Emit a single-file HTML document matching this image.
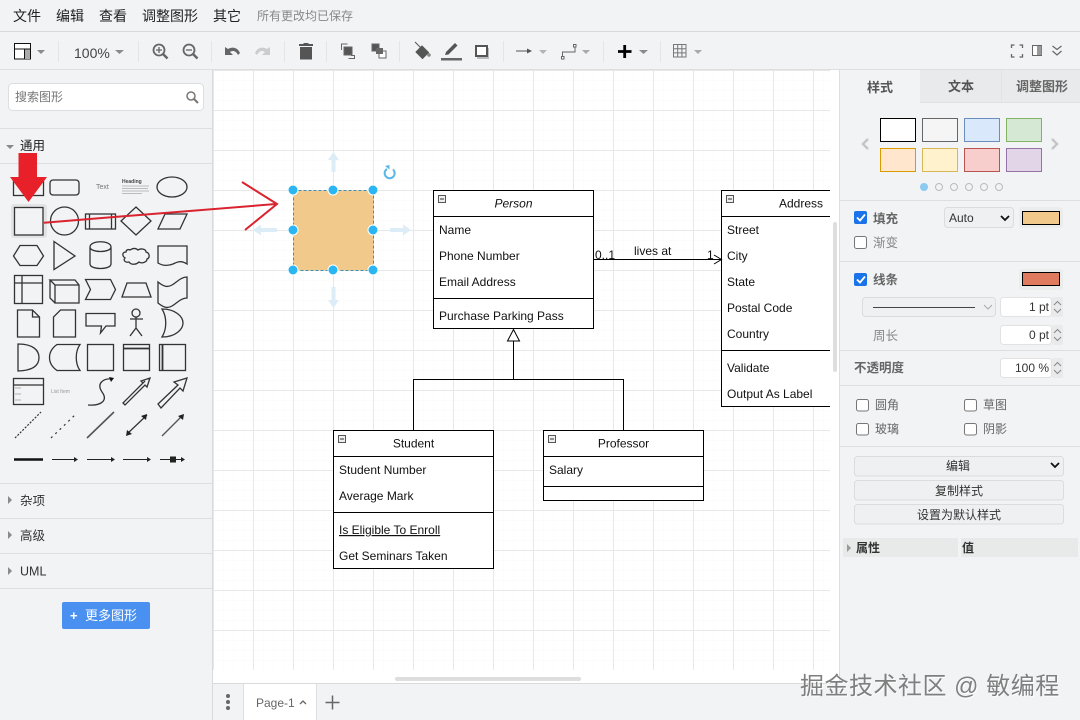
<!DOCTYPE html>
<html><head><meta charset="utf-8"><style>
html,body{margin:0;padding:0;width:1080px;height:720px;overflow:hidden;background:#f1f3f4}
svg{display:block;position:absolute;left:0;top:0}
text{font-family:"Liberation Sans","Noto Sans CJK SC",sans-serif;font-size:12px;fill:#1a1a1a}
.m{font-size:14px;fill:#222}
.d{font-size:12px;fill:#111}
.s{fill:none;stroke:#333;stroke-width:1.3}
.u{fill:none;stroke:#000;stroke-width:1}
.h{fill:#29b6f2;stroke:#fff;stroke-width:1}
.g{fill:#555}
.sep{stroke:#e3e5e7;stroke-width:1}
.dv{stroke:#dcdee0;stroke-width:1}
.btn{fill:#eff0f1;stroke:#dcdcdc}
.sw{stroke-width:1}
.inp{fill:#fff;stroke:#e2e2e2}
.spin{fill:#e9eaeb}
.car{fill:#8a8a8a}
</style></head><body>
<svg width="1080" height="720" viewBox="0 0 1080 720" xmlns="http://www.w3.org/2000/svg">
<defs>
<pattern id="gm" width="10" height="10" patternUnits="userSpaceOnUse" x="3.5" y="0.5"><path d="M10 0H0V10" fill="none" stroke="#f8f8f8" stroke-width="1"/></pattern>
<pattern id="gM" width="40" height="40" patternUnits="userSpaceOnUse" x="13" y="30"><path d="M40.5 .5H.5V40.5" fill="none" stroke="#e8e8e8" stroke-width="1"/></pattern>
</defs>
<rect width="1080" height="720" fill="#f1f3f4"/>
<!-- canvas -->
<rect x="213" y="70" width="627" height="613" fill="#fff"/>
<rect x="213" y="70" width="617" height="600" fill="url(#gm)"/>
<rect x="213" y="70" width="617" height="600" fill="url(#gM)"/>
<rect x="839" y="70" width="1" height="613" fill="#dcdee0"/>
<rect x="833" y="222" width="4" height="150" rx="2" fill="#dedede"/>
<rect x="395" y="677" width="186" height="4" rx="2" fill="#dedede"/>
<!-- menu -->
<text class="m" x="13" y="21">文件</text><text class="m" x="56" y="21">编辑</text><text class="m" x="99" y="21">查看</text><text class="m" x="142" y="21">调整图形</text><text class="m" x="213" y="21">其它</text>
<text x="257" y="20" style="fill:#888">所有更改均已保存</text>
<line x1="0" y1="31.5" x2="1080" y2="31.5" stroke="#d6d8da"/>
<line x1="0" y1="69.5" x2="1080" y2="69.5" stroke="#dcdee0"/>
<!-- toolbar separators -->
<g class="sep"><path d="M58.5 41V62M138.5 41V62M211.5 41V62M284.5 41V62M326.5 41V62M399.5 41V62M503.5 41V62M603.5 41V62M660.5 41V62"/></g>
<!-- layout -->
<rect x="14.5" y="43.5" width="16" height="15.5" fill="#fff" stroke="#111"/><rect x="25" y="49" width="5" height="10" fill="#aaa"/><path d="M14.5 49H30.5M24.5 49V59" stroke="#111" fill="none"/>
<path class="car" d="M37 50h8l-4 4z"/>
<text x="74" y="58" style="font-size:14px;fill:#444">100%</text>
<path class="car" d="M115 50h9l-4.500 4z"/>
<!-- zoom -->
<g fill="none" stroke="#666" stroke-width="1.800"><circle cx="159" cy="50" r="5.500"/><path d="M163 54l4.500 4.500" stroke-width="2.500"/><path d="M156 50h6M159 47v6" stroke-width="1.300"/>
<circle cx="189" cy="50" r="5.500"/><path d="M193 54l4.500 4.500" stroke-width="2.500"/><path d="M186 50h6" stroke-width="1.300"/></g>
<!-- undo/redo -->
<path d="M225 52l0-5 3 2c5-3 10-1 12 4l-2 2c-2-4-5-5-8-3l3 3h-8z" fill="#666"/>
<path d="M270 52l0-5-3 2c-5-3-10-1-12 4l2 2c2-4 5-5 8-3l-3 3h8z" fill="#ccc"/>
<!-- trash -->
<path class="g" d="M300 47h12v12.500h-12zM299 44h14v2h-14zM303.500 43h5v1.500h-5z"/>
<!-- to front/back -->
<g fill="none" stroke="#666"><path d="M341.500 47.500v-3.500h6M351 55.500h3.500v3h-6"/><rect x="344" y="47" width="8" height="8" fill="#555"/><path d="M341.500 44v6"/>
<rect x="372" y="44" width="7" height="7" fill="#555"/><rect x="379" y="51" width="7" height="7" fill="#fff"/><rect x="376" y="48" width="7" height="6" fill="#666" stroke="none"/></g>
<!-- fill -->
<path class="g" d="M416 52l6-6 6.500 6.500-6 6zM415 42l8 8" stroke="#555"/><circle cx="429" cy="55" r="1.800" fill="#888"/>
<!-- pen -->
<path class="g" d="M445 55l1-3 9-9 2.500 2.500-9 9z"/><rect x="441" y="58" width="21" height="2.500" fill="#666"/>
<!-- shadow -->
<rect x="477" y="48" width="12" height="11" fill="#bbb"/><rect x="476" y="46" width="11" height="10" fill="#fff" stroke="#555" stroke-width="2"/>
<!-- arrow -->
<path d="M516 51h14" stroke="#555" fill="none"/><path d="M527 48.500l5 2.500-5 2.500z" fill="#555"/>
<path class="car" d="M539 50h8l-4 4z" opacity=".6"/>
<!-- waypoint -->
<path d="M562.500 56v-4h12.500v-6" fill="none" stroke="#666"/><rect x="561.500" y="56.500" width="2.500" height="2.500" fill="#fff" stroke="#666"/><rect x="573.500" y="44.500" width="2.500" height="2.500" fill="#fff" stroke="#666"/>
<path class="car" d="M582 50h8l-4 4z" opacity=".7"/>
<!-- plus -->
<path d="M618 51.500h13.500M624.700 45v13" stroke="#000" stroke-width="2.800" fill="none"/>
<path class="car" d="M639 50h9l-4.500 4z"/>
<!-- table -->
<path d="M673.500 44.500h12.500v12.500h-12.500zM673.500 48.700h12.500M673.500 52.900h12.500M677.700 44.500v12.500M681.900 44.500v12.500" fill="none" stroke="#777"/>
<path class="car" d="M694 50h8l-4 4z" opacity=".7"/>
<!-- right icons -->
<path d="M1011.500 48v-3h3M1019.500 45h3v3M1022.500 54v3h-3M1014.500 57h-3v-3" fill="none" stroke="#666" stroke-width="1.300"/>
<rect x="1032.500" y="45.500" width="9" height="10" fill="#fff" stroke="#666"/><rect x="1037" y="46" width="4.500" height="9" fill="#999"/>
<path d="M1052.500 46l4.500 3.500 4.500-3.500M1052.500 51l4.500 4 4.500-4" fill="none" stroke="#666" stroke-width="1.200"/>

<!-- left sidebar -->
<rect x="212" y="70" width="1" height="650" fill="#d8dadc"/>
<rect x="8.500" y="83.500" width="195" height="27" rx="4" fill="#fff" stroke="#dcdee0"/>
<text x="15" y="101" style="fill:#777">搜索图形</text>
<circle cx="191" cy="96" r="4" fill="none" stroke="#777" stroke-width="1.500"/><path d="M194 99l4 4" stroke="#777" stroke-width="2"/>
<g class="dv"><path d="M0 128.500H212M0 163.500H212M0 483.500H212M0 518.500H212M0 553.500H212M0 588.500H212"/></g>
<path class="car" d="M6 145h8l-4 4z"/><text x="20" y="150" style="font-size:12.500px">通用</text>
<path class="car" d="M8 496l4 4-4 4z"/><text x="20" y="505" style="font-size:12.500px;fill:#333">杂项</text>
<path class="car" d="M8 531l4 4-4 4z"/><text x="20" y="540" style="font-size:12.500px;fill:#333">高级</text>
<path class="car" d="M8 567l4 4-4 4z"/><text x="20" y="575.500" style="font-size:12.500px;fill:#333">UML</text>
<rect x="62" y="602" width="88" height="27" rx="2" fill="#4a90f0"/>
<text x="70" y="620" style="fill:#fff;font-size:13px;font-weight:bold">+</text><text x="85" y="620" style="fill:#fff;font-size:13px">更多图形</text>

<rect x="11" y="204" width="36" height="34" rx="3" fill="#e1e3e4"/>
<rect x="14.500" y="207.500" width="28.500" height="27.500" fill="#f1f3f4"/>
<g class="s">
<rect x="13.500" y="180.500" width="30" height="15"/><rect x="50" y="180" width="29" height="15" rx="3"/>
<ellipse cx="172" cy="187" rx="15" ry="10"/>
<rect x="14.500" y="207.500" width="28.500" height="27.500"/><circle cx="64.500" cy="221" r="14"/>
<rect x="85.500" y="214" width="30" height="15"/><path d="M89.500 214v15M111.500 214v15"/>
<path d="M136 207l15 14-15 14-15-14z"/><path d="M158 229l7-15h22l-7 15z"/>
<path d="M13.500 256l6.500-10.500h17l6.500 10.500-6.500 9.500h-17z"/><path d="M54 241.500l21 14.500-21 13.500z"/>
<path d="M90 247v17c0 6 21 6 21 0v-17c0-7-21-7-21 0c0 6 21 6 21 0"/>
<path d="M130 250c3-2 6-2 8 0c3-2 8-1 8 2c4 1 4 6 1 7c0 3-5 5-8 3c-3 3-8 3-10 0c-4 1-6-2-4-4c-3-2-3-6 1-6c0-2 2-3 4-2z"/>
<path d="M158 246h29v18c-6-4-10-2-14 0c-5 2-10 2-15-1z"/>
<rect x="14.500" y="275.500" width="28" height="28"/><path d="M22 275.500v28M14.500 283h28"/>
<path d="M50 280l5 5v18h24v-18l-4-5zM55 285h24M50 280v18l5 5"/>
<path d="M85.500 279.500h25l5 10-5 10h-25l5-10z"/><path d="M122 297l5-14h19l5 14z"/>
<path d="M158 282c5 4 9 6 14 3s9-8 15-8v21c-6 0-10 5-15 8s-9 1-14-3z"/>
<path d="M17.500 310h15l7 7v20h-22zM32.500 310v7h7"/><path d="M60.500 310h15v27h-22v-20z"/>
<path d="M86 313.500h29v12.500h-9l-5.500 7 1-7h-15.500z"/>
<circle cx="136" cy="313" r="4"/><path d="M136 317v11M130 319h13M136 328l-6 8M136 328l6 8"/>
<path d="M162 309c14 0 21 8 21 14c0 6-7 14-21 14c5-8 5-20 0-28z"/>
<path d="M18 344c16 0 21 7 21 13.500c0 7-5 13-21 13.500z"/>
<path d="M57 344.500h23c-5 7-5 19 0 26h-23c-10-7-10-19 0-26z"/>
<rect x="87.500" y="344.500" width="26" height="26"/><rect x="123.500" y="344.500" width="26" height="26"/><path d="M123.500 348.500h26" stroke-width="1.800"/>
<rect x="159.500" y="344.500" width="26" height="26"/><path d="M162.500 344.500v26" stroke-width="1.800"/>
<rect x="13.500" y="378.500" width="30" height="26"/><path d="M13.500 385h30"/>
<path d="M88 405c14 1 20-5 14-13c-6-9 2-14 10-13"/>
<path d="M123 403l20-20-2-2 9-3-3 9-2-2-20 20-2-2zM126 400l19-19"/>
<path d="M158 404l20-19-4-3 13-4-4 13-3-3-19 20z"/>
</g>
<path d="M15 388h6M15 394h6M15 400h6" stroke="#999" stroke-width=".8"/>
<path d="M114 378l-5-1 2 5z" fill="#111"/>
<g fill="none" stroke="#333">
<path d="M15 438l26-26" stroke-dasharray="2 1.500" stroke-width="1.200"/><path d="M51 438l25-24" stroke-dasharray="2 4" stroke-width="1.200"/>
<path d="M87 438l27-26" stroke="#555" stroke-width="1.600"/><path d="M127 434l20-19" stroke-width="1.300"/><path d="M162 436l21-21" stroke-width="1.300" stroke="#555"/>
<path d="M14 459.500h29" stroke="#111" stroke-width="2.500"/><path d="M52 459.500h25M87 459.500h27M123 459.500h27M160 459.500h24" stroke="#222"/>
</g>
<g fill="#222"><path d="M147 414l-1 6-5-4zM126 436l1-6 5 4zM184 414l-1 6-5-4zM78 459.500l-4-2.500v5zM115 459.500l-4-2.500v5zM151 459.500l-4-2.500v5zM185 459.500l-4-2.500v5z"/><rect x="170" y="456.500" width="6" height="6"/></g>
<text x="51" y="393" style="font-size:5px;fill:#999">List Item</text>
<text x="96" y="189" style="font-size:7px;fill:#777">Text</text>
<text x="122" y="183" style="font-size:5px;font-weight:bold;fill:#444">Heading</text>
<path d="M122 186h27M122 188.500h26M122 191h27M122 193.500h20" stroke="#aaa" stroke-width=".8"/>

<!-- red arrows -->
<path d="M18.500 153H37V177H47L28.500 202 10 177H18.500z" fill="#e8202a"/>
<path d="M44 222.700L276 204M242 182L277 204 245 230" fill="none" stroke="#d9232e" stroke-width="2"/>

<!-- selected shape -->
<rect x="293.500" y="190.500" width="80" height="80" fill="#f0c98b" stroke="#3f8fb5" stroke-dasharray="3 2"/>
<g fill="#dcedf7">
<path d="M333.500 152l5.500 8h-3.500v12h-4v-12h-3.500z"/><path d="M333.500 308l5.500-8h-3.500v-13h-4v13h-3.500z"/>
<path d="M253 230l8-5.500v3.500h16v4h-16v3.500z"/><path d="M411 230l-8-5.500v3.500h-13v4h13v3.500z"/>
</g>
<g class="h"><circle cx="293" cy="190" r="5"/><circle cx="333" cy="190" r="5"/><circle cx="373" cy="190" r="5"/><circle cx="293" cy="230" r="5"/><circle cx="373" cy="230" r="5"/><circle cx="293" cy="270" r="5"/><circle cx="333" cy="270" r="5"/><circle cx="373" cy="270" r="5"/></g>
<path d="M393 169.500a5 5 0 1 1-6-0.500" fill="none" stroke="#5ab7e8" stroke-width="2"/><path d="M385 166l4.500-1v4.500z" fill="#5ab7e8"/>

<!-- UML -->
<g fill="#fff" stroke="#000">
<rect x="433.500" y="190.500" width="160" height="138"/>
<rect x="333.500" y="430.500" width="160" height="138"/>
<rect x="543.500" y="430.500" width="160" height="70"/>
<path d="M830 190.500H721.500V406.500H830"/>
</g>
<path class="u" d="M433.500 216.500h160M433.500 298.500h160M721.500 216.500H830M721.500 350.500H830M333.500 456.500h160M333.500 512.500h160M543.500 456.500h160M543.500 486.500h160"/>
<path class="u" d="M593.500 259.500H721.500M714 255l7.500 4.500-7.500 4.500M513.500 341V379.500M413.500 430V379.500H623.500V430"/>
<path d="M513.500 329.500l6 11.500h-12z" fill="#fff" stroke="#000"/>
<g fill="#eee" stroke="#555"><rect x="438.500" y="195.500" width="7" height="7"/><rect x="726.500" y="195.500" width="7" height="7"/><rect x="338.500" y="435.500" width="7" height="7"/><rect x="548.500" y="435.500" width="7" height="7"/></g>
<path d="M440 199h4M728 199h4M340 439h4M550 439h4" stroke="#333"/>
<g>
<text class="d" x="513.500" y="207.500" text-anchor="middle" style="font-style:italic">Person</text>
<text class="d" x="439" y="234">Name</text><text class="d" x="439" y="260">Phone Number</text><text class="d" x="439" y="286">Email Address</text><text class="d" x="439" y="320">Purchase Parking Pass</text>
<text class="d" x="595" y="259">0..1</text><text class="d" x="634" y="255">lives at</text><text class="d" x="707" y="259">1</text>
<text class="d" x="779" y="207.500">Address</text>
<text class="d" x="727" y="234">Street</text><text class="d" x="727" y="260">City</text><text class="d" x="727" y="286">State</text><text class="d" x="727" y="312">Postal Code</text><text class="d" x="727" y="338">Country</text><text class="d" x="727" y="372">Validate</text><text class="d" x="727" y="398">Output As Label</text>
<text class="d" x="413.500" y="447.500" text-anchor="middle">Student</text>
<text class="d" x="339" y="474">Student Number</text><text class="d" x="339" y="500">Average Mark</text><text class="d" x="339" y="534" text-decoration="underline">Is Eligible To Enroll</text><text class="d" x="339" y="560">Get Seminars Taken</text>
<text class="d" x="623.500" y="447.500" text-anchor="middle">Professor</text>
<text class="d" x="549" y="474">Salary</text>
</g>

<!-- bottom -->
<rect x="213" y="683" width="627" height="37" fill="#f1f3f4"/>
<rect x="213" y="683" width="627" height="1" fill="#d8dadc"/>
<rect x="244" y="684" width="72" height="36" fill="#fff"/>
<path d="M243.500 684V720M316.500 684V720" stroke="#dcdee0"/>
<circle cx="228" cy="696" r="2" fill="#666"/><circle cx="228" cy="702" r="2" fill="#666"/><circle cx="228" cy="708" r="2" fill="#666"/>
<text x="256" y="707" style="fill:#666">Page-1</text>
<path d="M300 704l3-3 3 3" fill="none" stroke="#666" stroke-width="1.300"/>
<path d="M325.500 702.500h14M332.500 695.500v14" stroke="#666" stroke-width="1.500"/>

<!-- right panel -->
<rect x="840" y="70" width="240" height="650" fill="#f1f3f4"/>
<rect x="920" y="70" width="160" height="32" fill="#e9eaeb"/>
<path d="M1001.500 70V102" stroke="#e2e3e4"/>
<path d="M920 102.500H1080" stroke="#e0e1e2"/>
<text x="867" y="92" style="font-size:13px;font-weight:bold;fill:#555">样式</text><text x="948" y="91" style="font-size:13px;font-weight:bold;fill:#555">文本</text><text x="1016" y="91" style="font-size:13px;font-weight:bold;fill:#666">调整图形</text>
<g class="sw">
<rect x="880.500" y="118.500" width="35" height="23" fill="#fff" stroke="#000"/>
<rect x="922.500" y="118.500" width="35" height="23" fill="#f5f5f5" stroke="#666"/>
<rect x="964.500" y="118.500" width="35" height="23" fill="#dae8fc" stroke="#6c8ebf"/>
<rect x="1006.500" y="118.500" width="35" height="23" fill="#d5e8d4" stroke="#82b366"/>
<rect x="880.500" y="148.500" width="35" height="23" fill="#ffe6cc" stroke="#d79b00"/>
<rect x="922.500" y="148.500" width="35" height="23" fill="#fff2cc" stroke="#d6b656"/>
<rect x="964.500" y="148.500" width="35" height="23" fill="#f8cecc" stroke="#b85450"/>
<rect x="1006.500" y="148.500" width="35" height="23" fill="#e1d5e7" stroke="#9673a6"/>
</g>
<path d="M868 139l-5 5 5 5M1052 139l5 5-5 5" fill="none" stroke="#c4c6c8" stroke-width="2.500"/>
<circle cx="924" cy="187" r="4" fill="#8ccaf2"/>
<g fill="none" stroke="#bbb"><circle cx="939" cy="187" r="3.500"/><circle cx="954" cy="187" r="3.500"/><circle cx="969" cy="187" r="3.500"/><circle cx="984" cy="187" r="3.500"/><circle cx="999" cy="187" r="3.500"/></g>
<g class="dv"><path d="M840 200.500H1080M840 261.500H1080M840 350.500H1080M840 385.500H1080M840 446.500H1080"/></g>

<rect x="854" y="211" width="13" height="13" rx="2" fill="#1a73e8"/><path d="M857 217.500l3 3 5-6" fill="none" stroke="#fff" stroke-width="1.800"/>
<text x="873" y="223" style="font-size:12.500px;font-weight:bold;fill:#666">填充</text>
<rect x="944.500" y="207.500" width="69" height="20" rx="3" class="btn"/><text x="949" y="222" style="fill:#333">Auto</text><path d="M1001 216l4 4 4-4" fill="none" stroke="#111" stroke-width="1.800"/>
<rect x="1019" y="207" width="44" height="21" rx="3" fill="#ebecec"/><rect x="1022.500" y="211.500" width="37" height="13" fill="#f0c98b" stroke="#000"/>
<rect x="854.500" y="236.500" width="12" height="12" rx="2" fill="#fff" stroke="#777"/><text x="873" y="247" style="font-size:12.500px;fill:#888">渐变</text>
<rect x="854" y="273" width="13" height="13" rx="2" fill="#1a73e8"/><path d="M857 279.500l3 3 5-6" fill="none" stroke="#fff" stroke-width="1.800"/>
<text x="873" y="284" style="font-size:12.500px;font-weight:bold;fill:#666">线条</text>
<rect x="1019" y="269" width="44" height="21" rx="3" fill="#ebecec"/><rect x="1022.500" y="272.500" width="37" height="13" fill="#e07a5f" stroke="#000"/>
<rect x="862.500" y="297.500" width="133" height="19" rx="3" class="btn"/><path d="M873 307.500h102" stroke="#444"/><path d="M984 305l4 4 4-4" fill="none" stroke="#aaa"/>
<g>
<rect x="1000.500" y="297.500" width="51" height="19" rx="3" class="inp"/><text x="1049" y="311" text-anchor="end" style="fill:#333">1 pt</text>
<rect x="1000.500" y="325.500" width="51" height="19" rx="3" class="inp"/><text x="1049" y="339" text-anchor="end" style="fill:#333">0 pt</text>
<rect x="1000.500" y="358.500" width="51" height="19" rx="3" class="inp"/><text x="1049" y="372" text-anchor="end" style="fill:#333">100 %</text>
<rect x="1052" y="297" width="11" height="20" rx="2" class="spin"/><rect x="1052" y="325" width="11" height="20" rx="2" class="spin"/><rect x="1052" y="358" width="11" height="20" rx="2" class="spin"/>
<path d="M1054 305l3.500-3.500 3.500 3.500M1054 309l3.500 3.500 3.500-3.500M1054 333l3.500-3.500 3.500 3.500M1054 337l3.500 3.500 3.500-3.500M1054 366l3.500-3.500 3.500 3.500M1054 370l3.500 3.500 3.500-3.500" fill="none" stroke="#888"/>
</g>
<text x="873" y="340" style="font-size:12.500px;fill:#888">周长</text>
<text x="854" y="372" style="font-size:12.500px;font-weight:bold;fill:#666">不透明度</text>
<g fill="#fff" stroke="#777"><rect x="856.500" y="399.500" width="12" height="11.500" rx="2"/><rect x="964.500" y="399.500" width="12" height="11.500" rx="2"/><rect x="856.500" y="423.500" width="12" height="11.500" rx="2"/><rect x="964.500" y="423.500" width="12" height="11.500" rx="2"/></g>
<text x="875" y="409" style="fill:#666">圆角</text><text x="983" y="409" style="fill:#666">草图</text><text x="875" y="433" style="fill:#666">玻璃</text><text x="983" y="433" style="fill:#666">阴影</text>
<rect x="854.500" y="456.500" width="209" height="19.500" rx="3" class="btn"/><text x="958" y="470" text-anchor="middle" style="fill:#333">编辑</text><path d="M1051 463l4 4 4-4" fill="none" stroke="#111" stroke-width="1.800"/>
<rect x="854.500" y="480.500" width="209" height="19.500" rx="3" class="btn"/><text x="959" y="495" text-anchor="middle" style="fill:#333">复制样式</text>
<rect x="854.500" y="504.500" width="209" height="19.500" rx="3" class="btn"/><text x="959" y="519" text-anchor="middle" style="fill:#333">设置为默认样式</text>
<rect x="843" y="538" width="235" height="19" fill="#e8e9e9"/><rect x="958" y="538" width="3" height="19" fill="#f1f3f4"/>
<path d="M847 544l4 4-4 4z" fill="#999"/>
<text x="856" y="552" style="font-weight:bold;fill:#333">属性</text><text x="962" y="552" style="font-weight:bold;fill:#333">值</text>

<!-- watermark -->
<text x="800.800" y="694.800" style="font-size:24px;letter-spacing:.5px;fill:#fff" xml:space="preserve">掘金技术社区 @ 敏编程</text>
<text x="800" y="694" style="font-size:24px;letter-spacing:.5px;fill:#7f7f7f" xml:space="preserve">掘金技术社区 @ 敏编程</text>
</svg>
</body></html>
